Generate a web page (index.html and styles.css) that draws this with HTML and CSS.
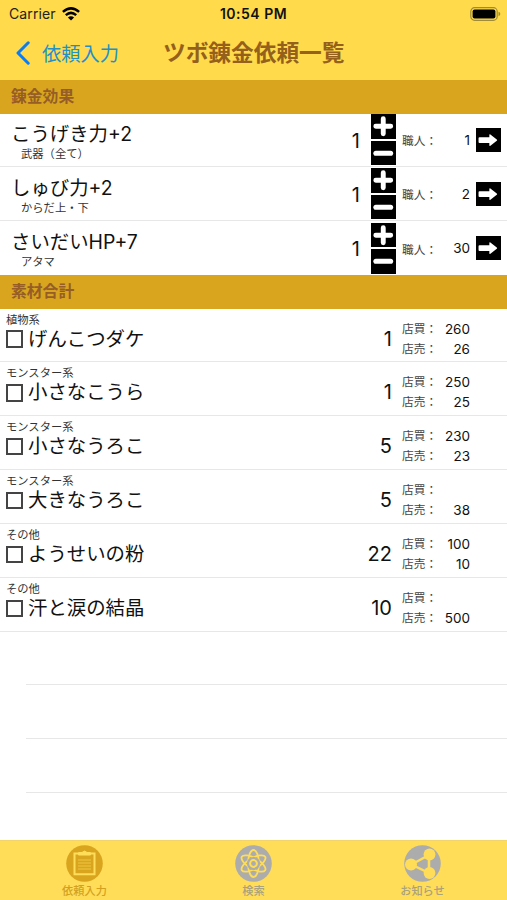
FILE: index.html
```html
<!doctype html>
<html lang="ja">
<head>
	<meta charset="utf-8">
	<title>ツボ錬金依頼一覧</title>
	<meta name="viewport" content="width=device-width, initial-scale=1">
	<link rel="stylesheet" href="styles.css">
</head>
<body>
	<svg class="defs" width="0" height="0">
		<symbol id="plus" viewBox="0 0 25 25"><path d="M12.5 4.900v15.200M4.900 12.500h15.200" stroke="#fff" stroke-width="5" stroke-linecap="round"/></symbol>
		<symbol id="minus" viewBox="0 0 25 25"><path d="M5 12.5h15" stroke="#fff" stroke-width="5.2" stroke-linecap="round"/></symbol>
		<symbol id="arrow" viewBox="0 0 25 25"><path d="M3.6 9.4h10V7.400q0-1.400 1.100-.7l6.500 5q.8.7 0 1.400l-6.500 5q-1.100.7-1.100-.7v-2h-10q-1 0-1-1v-4q0-1 1-1z" fill="#fff"/></symbol>
	</svg>

	<header>
		<div class="status">
			<span class="carrier">Carrier
				<svg width="18" height="14" viewBox="0 0 18 14" fill="none" stroke="#000" stroke-width="2.5"><path d="M.9 4.900q8.100-7 16.200 0M3.800 8.100q5.200-4.400 10.400 0"/><path d="M9 13.500L5.900 10.400q3.100-2.500 6.200 0z" fill="#000" stroke="none"/></svg>
			</span>
			<span class="time">10:54 PM</span>
			<svg class="battery" width="31" height="14" viewBox="0 0 31 14"><rect x=".8" y=".7" width="26.400" height="12.600" rx="3.800" fill="none" stroke="#a08b36" stroke-width="1.200"/><rect x="2.600" y="2.500" width="22.800" height="9" rx="2" /><path d="M28.500 4.800q1.800.6 1.800 2.200t-1.800 2.200z" fill="#a08b36"/></svg>
		</div>
		<nav>
			<a class="back"><svg width="15" height="24" viewBox="0 0 15 24"><path d="M13.200 1.800L3 12l10.200 10.200" fill="none" stroke="#0a7cf5" stroke-width="3" stroke-linecap="round" stroke-linejoin="round"/></svg>依頼入力</a>
			<h1>ツボ錬金依頼一覧</h1>
		</nav>
	</header>

	<main>
		<h2>錬金効果</h2>
		<ul>
			<li class="effect">
				<div class="name">こうげき力+2<small>武器（全て）</small></div>
				<span class="count">1</span>
				<div class="stepper"><svg><use href="#plus"/></svg><svg><use href="#minus"/></svg></div>
				<span class="label">職人：</span><span class="value">1</span>
				<svg class="go"><use href="#arrow"/></svg>
			</li>
			<li class="effect">
				<div class="name">しゅび力+2<small>からだ上・下</small></div>
				<span class="count">1</span>
				<div class="stepper"><svg><use href="#plus"/></svg><svg><use href="#minus"/></svg></div>
				<span class="label">職人：</span><span class="value">2</span>
				<svg class="go"><use href="#arrow"/></svg>
			</li>
			<li class="effect">
				<div class="name">さいだいHP+7<small>アタマ</small></div>
				<span class="count">1</span>
				<div class="stepper"><svg><use href="#plus"/></svg><svg><use href="#minus"/></svg></div>
				<span class="label">職人：</span><span class="value">30</span>
				<svg class="go"><use href="#arrow"/></svg>
			</li>
		</ul>

		<h2>素材合計</h2>
		<ul>
			<li class="material">
				<div class="item"><small>植物系</small><div class="name"><i class="check"></i>げんこつダケ</div></div>
				<span class="count">1</span>
				<dl><dt>店買：</dt><dd>260</dd><dt>店売：</dt><dd>26</dd></dl>
			</li>
			<li class="material">
				<div class="item"><small>モンスター系</small><div class="name"><i class="check"></i>小さなこうら</div></div>
				<span class="count">1</span>
				<dl><dt>店買：</dt><dd>250</dd><dt>店売：</dt><dd>25</dd></dl>
			</li>
			<li class="material">
				<div class="item"><small>モンスター系</small><div class="name"><i class="check"></i>小さなうろこ</div></div>
				<span class="count">5</span>
				<dl><dt>店買：</dt><dd>230</dd><dt>店売：</dt><dd>23</dd></dl>
			</li>
			<li class="material">
				<div class="item"><small>モンスター系</small><div class="name"><i class="check"></i>大きなうろこ</div></div>
				<span class="count">5</span>
				<dl><dt>店買：</dt><dd></dd><dt>店売：</dt><dd>38</dd></dl>
			</li>
			<li class="material">
				<div class="item"><small>その他</small><div class="name"><i class="check"></i>ようせいの粉</div></div>
				<span class="count">22</span>
				<dl><dt>店買：</dt><dd>100</dd><dt>店売：</dt><dd>10</dd></dl>
			</li>
			<li class="material">
				<div class="item"><small>その他</small><div class="name"><i class="check"></i>汗と涙の結晶</div></div>
				<span class="count">10</span>
				<dl><dt>店買：</dt><dd></dd><dt>店売：</dt><dd>500</dd></dl>
			</li>
			<li class="empty"></li>
			<li class="empty"></li>
			<li class="empty"></li>
		</ul>
	</main>

	<footer>
		<a class="tab active">
			<svg width="37" height="37" viewBox="0 0 37 37"><circle cx="18.500" cy="18.500" r="18.300" fill="#d9a51f"/><g fill="none" stroke="#ffdd58"><path d="M12 8.500H8.500v20.800h20V8.500H25" stroke-width="2"/><path d="M12.500 10V7.500h3.500q2.500-3 5 0h3.500V10z" fill="#ffdd58" stroke-width="1"/><path d="M12 15h13M12 18h13M12 21h13M12 24h13" stroke-width="1.200" opacity=".6"/></g></svg>
			依頼入力
		</a>
		<a class="tab">
			<svg width="37" height="37" viewBox="0 0 37 37"><circle cx="18.500" cy="18.500" r="18.300" fill="#acacac"/><g fill="none" stroke="#ffdd58" stroke-width="1.800"><ellipse cx="18.500" cy="18.500" rx="5.400" ry="13.500"/><ellipse cx="18.500" cy="18.500" rx="5.400" ry="13.500" transform="rotate(60 18.500 18.500)"/><ellipse cx="18.500" cy="18.500" rx="5.400" ry="13.500" transform="rotate(120 18.500 18.500)"/></g><circle cx="18.500" cy="18.500" r="6.600" fill="#acacac"/><circle cx="18.500" cy="18.500" r="3.400" fill="none" stroke="#ffdd58" stroke-width="2"/></svg>
			検索
		</a>
		<a class="tab">
			<svg width="37" height="37" viewBox="0 0 37 37"><circle cx="18.500" cy="18.500" r="18.300" fill="#acacac"/><path d="M7.500 19.500L25 10v18z" fill="none" stroke="#ffdd58" stroke-width="2.500"/><g fill="#ffdd58"><circle cx="7" cy="19.500" r="6"/><circle cx="25.500" cy="9.500" r="5.900"/><circle cx="25.500" cy="28" r="5.900"/></g></svg>
			お知らせ
		</a>
	</footer>
</body>
</html>
```

FILE: styles.css
```css
* {
	box-sizing: border-box;
}
body {
	margin: 0;
	height: 900px;
	display: flex;
	flex-direction: column;
	overflow: hidden;
	background: #fff;
	color: #111;
	font-family: Inter, "Noto Sans CJK JP", sans-serif;
}
svg {
	display: block;
	flex: none;
}
.defs {
	height: 0;
}
header {
	height: 80px;
	background: #ffda4b;
}
.status {
	display: grid;
	grid-template-columns: 1fr auto 1fr;
	align-items: center;
	height: 27px;
	padding: 0 6px 0 9px;
	font-size: 14px;
}
.carrier {
	display: flex;
	align-items: center;
	gap: 6px;
	color: #222;
	letter-spacing: .1px;
}
.time {
	margin-right: 3px;
	font-weight: 600;
	font-size: 14px;
	letter-spacing: .5px;
}
.battery {
	justify-self: end;
}
nav {
	display: flex;
	align-items: center;
	height: 51px;
	padding-left: 15px;
}
.back {
	display: flex;
	align-items: center;
	gap: 12px;
	width: 148px;
	color: #2290cb;
	font-size: 19.3px;
}
h1 {
	margin: 1px 0 0;
	color: #94601b;
	font-size: 22.7px;
	font-weight: 700;
	line-height: 30px;
}
h2 {
	height: 33.5px;
	margin: 0;
	padding-left: 11px;
	background: #d9a51f;
	color: #965d26;
	font-size: 15.8px;
	font-weight: 700;
	line-height: 34px;
}
ul {
	margin: 0;
	padding: 0;
	list-style: none;
}
li {
	display: flex;
	height: 53.85px;
	border-bottom: 1px solid #e7e7e7;
}
.name {
	font-size: 19.4px;
	line-height: 25px;
}
small {
	display: block;
	color: #333;
	font-size: 11.3px;
	line-height: 14px;
}
.count {
	font-size: 20px;
	text-align: right;
}

/* effect rows */
.effect {
	align-items: center;
}
.effect:last-child {
	border-bottom: 0;
}
.effect .name {
	width: 300px;
	padding: 3px 0 0 11px;
}
.effect small {
	padding-left: 10px;
}
.effect .count {
	width: 60px;
	padding-top: 2px;
}
.stepper {
	display: grid;
	gap: 2px;
	margin-left: 11px;
}
.stepper svg, .go {
	width: 24.500px;
	height: 24.500px;
	background: #000;
}
.label, dt {
	width: 36px;
	color: #444;
	font-size: 11.7px;
}
.label {
	margin-left: 6.500px;
}
.value {
	width: 32px;
	font-size: 13.5px;
	text-align: right;
}
.go {
	margin-left: 6px;
}

/* material rows */
.item {
	width: 300px;
	padding: 4px 0 0 6px;
}
.item .name {
	display: flex;
	align-items: center;
	gap: 5px;
}
.check {
	width: 17.500px;
	height: 17.500px;
	margin-left: -.500px;
	border: 2px solid #444;
}
.material .count {
	width: 92px;
	line-height: 61px;
}
dl {
	display: grid;
	grid-template-columns: 36px 32px;
	grid-auto-rows: 20px;
	margin: 10px 0 0 10px;
	line-height: 20px;
}
dd {
	margin: 0;
	font-size: 13.5px;
	text-align: right;
}
.empty {
	margin-left: 26px;
}

footer {
	display: grid;
	grid-template-columns: repeat(3, 1fr);
	height: 60.5px;
	margin-top: auto;
	border-top: 1px solid #f3d468;
	background: #ffdd58;
}
.tab {
	display: flex;
	flex-direction: column;
	align-items: center;
	padding-top: 4px;
	color: #aaa27c;
	font-size: 11.2px;
	font-weight: 500;
	line-height: 19px;
}
.active {
	color: #d3a11f;
}
```
